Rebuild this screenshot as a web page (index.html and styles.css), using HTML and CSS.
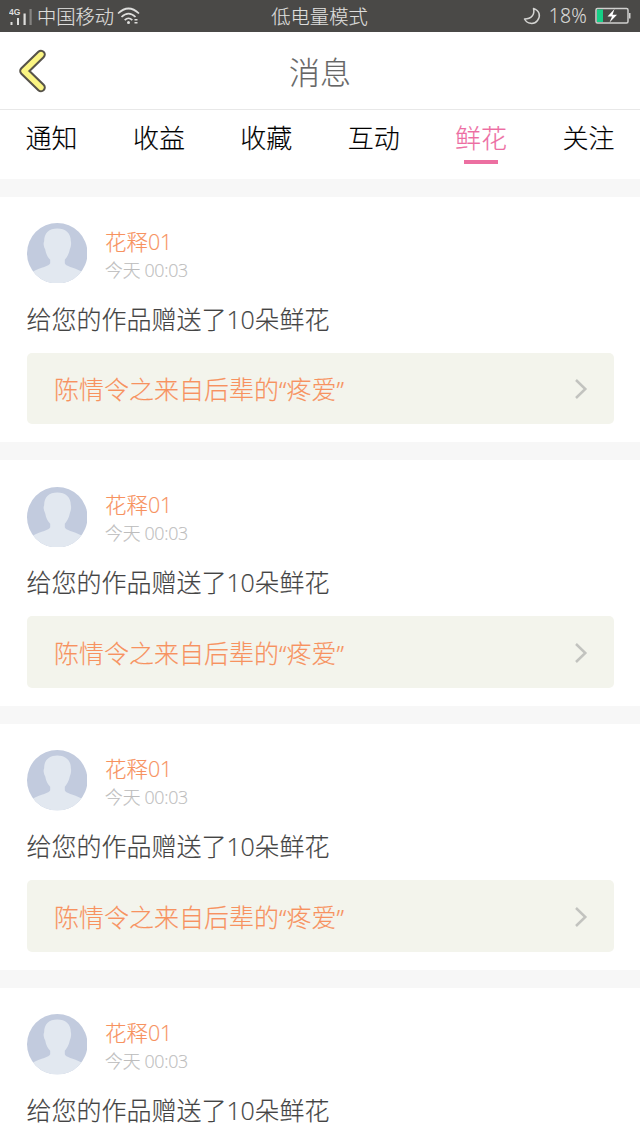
FILE: index.html
```
<!DOCTYPE html>
<html lang="zh-CN">
<head>
<meta charset="utf-8">
<title>消息</title>
<link rel="stylesheet" href="styles.css">
</head>
<body>
<svg class="defs" width="0" height="0" aria-hidden="true">
  <defs>
    <clipPath id="disc"><circle cx="30" cy="30" r="30"/></clipPath>
    <symbol id="person" viewBox="0 0 60 60">
      <g clip-path="url(#disc)">
        <rect width="60" height="60" fill="#c2cbde"/>
        <path d="M30 5.500C38 5.500 43.500 10 43.500 18C44 20 43.800 23 42.500 26C41.500 31 39.500 34 37.500 36.500V40C38 43 46 44 54 48L60 60H0L6 48C14 44 22 43 23 40V36.500C20.500 34 19 31 18 26C16.500 23 16 20 17 18C17 10 22 5.500 30 5.500Z" fill="#e2e8f0"/>
      </g>
    </symbol>
    <symbol id="chevron" viewBox="0 0 14 22"><path d="M2 2L11.300 11L2 20" fill="none" stroke="#c2c3bf" stroke-width="2.500"/></symbol>
  </defs>
</svg>
<div class="status">
  <div class="status-left">
    <svg class="signal" width="26" height="20" viewBox="0 0 26 20">
      <text class="signal-tag" x="0" y="8">4G</text>
      <g fill="#dededc"><rect x="1.500" y="15" width="2" height="3"/><rect x="8" y="11" width="2" height="7"/><rect x="14.500" y="6.500" width="2.200" height="11.500"/><rect x="20.500" y="2" width="2.200" height="16" opacity=".4"/></g>
    </svg>
    <span class="carrier">中国移动</span>
    <svg class="wifi" width="24" height="20" viewBox="0 0 24 20">
      <g fill="none" stroke="#dededc" stroke-width="1.700"><path d="M1 7.500Q11.500-2.500 22 7.500"/><path d="M4.500 11Q11.500 4 18.500 11"/><path d="M7.700 14.200Q11.500 10.300 15.300 14.200"/></g>
      <g fill="#dededc"><circle cx="11.500" cy="16.500" r="1.500"/><rect x="17.500" y="13" width="3" height="1.500"/><rect x="17.500" y="16" width="3" height="1.500"/></g>
    </svg>
  </div>
  <span class="mode">低电量模式</span>
  <div class="status-right">
    <svg width="18" height="18" viewBox="0 0 18 18"><path d="M10.500 1.500C12 7.500 8.500 12 1.500 12C4 17 11 18 14.500 13.500C18 9 16.500 3.500 10.500 1.500Z" fill="none" stroke="#d4d4d2" stroke-width="1.500" stroke-linejoin="round"/></svg>
    <span class="percent num">18%</span>
    <svg width="36" height="18" viewBox="0 0 36 18"><rect x="1" y="1.500" width="32" height="14.500" rx="1.500" fill="none" stroke="#d0d0ce" stroke-width="1.500"/><rect x="2" y="2.500" width="6" height="12.500" fill="#16cf86"/><path d="M34 6h1.500v5.500H34z" fill="#d0d0ce"/><path d="M19.500 2L12.500 9.500H17L14.500 15.500L22 7.800H17.500Z" fill="#fff"/></svg>
  </div>
</div>
<header class="header">
  <svg class="back" width="28" height="44" viewBox="0 0 28 44"><g fill="none" stroke-linecap="round" stroke-linejoin="round"><path d="M23 5.500L6 22L23 38.500" stroke="#57534a" stroke-width="9.600"/><path d="M23 5.500L6 22L23 38.500" stroke="#fbf583" stroke-width="5.400"/></g></svg>
  <h1 class="title">消息</h1>
</header>
<nav class="tabs">
  <a class="tab">通知</a><a class="tab">收益</a><a class="tab">收藏</a><a class="tab">互动</a><a class="tab active">鲜花</a><a class="tab">关注</a>
</nav>
<main class="feed">
  <article class="post">
    <div class="author"><svg class="avatar"><use href="#person"/></svg><div class="meta"><div class="name">花释<span class="num">01</span></div><div class="time">今天 <span class="num">00:03</span></div></div></div>
    <p class="message">给您的作品赠送了<span class="num">10</span>朵鲜花</p>
    <a class="work"><span class="work-title">陈情令之来自后辈的<span class="quote">“</span>疼爱<span class="quote">”</span></span><svg class="arrow"><use href="#chevron"/></svg></a>
  </article>
  <article class="post">
    <div class="author"><svg class="avatar"><use href="#person"/></svg><div class="meta"><div class="name">花释<span class="num">01</span></div><div class="time">今天 <span class="num">00:03</span></div></div></div>
    <p class="message">给您的作品赠送了<span class="num">10</span>朵鲜花</p>
    <a class="work"><span class="work-title">陈情令之来自后辈的<span class="quote">“</span>疼爱<span class="quote">”</span></span><svg class="arrow"><use href="#chevron"/></svg></a>
  </article>
  <article class="post">
    <div class="author"><svg class="avatar"><use href="#person"/></svg><div class="meta"><div class="name">花释<span class="num">01</span></div><div class="time">今天 <span class="num">00:03</span></div></div></div>
    <p class="message">给您的作品赠送了<span class="num">10</span>朵鲜花</p>
    <a class="work"><span class="work-title">陈情令之来自后辈的<span class="quote">“</span>疼爱<span class="quote">”</span></span><svg class="arrow"><use href="#chevron"/></svg></a>
  </article>
  <article class="post last">
    <div class="author"><svg class="avatar"><use href="#person"/></svg><div class="meta"><div class="name">花释<span class="num">01</span></div><div class="time">今天 <span class="num">00:03</span></div></div></div>
    <p class="message">给您的作品赠送了<span class="num">10</span>朵鲜花</p>
  </article>
</main>
</body>
</html>
```
FILE: styles.css
```
* { box-sizing: border-box; }
body {
  margin: 0;
  height: 1138px;
  overflow: hidden;
  display: flex;
  flex-direction: column;
  background: #fff;
  font-family: "Noto Sans CJK SC", "Noto Sans", sans-serif;
  font-weight: 300;
  -webkit-text-stroke: .15px currentColor;
}
svg { display: block; flex: none; }
.defs { position: absolute; }
.num { font-family: "Open Sans", "Noto Sans", sans-serif; font-weight: 300; line-height: 1; letter-spacing: -.3px; }
.status {
  flex: none;
  height: 32px;
  padding: 0 9px 0 9px;
  display: grid;
  grid-template-columns: 1fr auto 1fr;
  align-items: center;
  background: #4a4947;
  color: #dededc;
  font-size: 19.3px;
  line-height: 32px;
}
.status-left, .status-right { display: flex; align-items: center; }
.signal { margin-right: 2px; margin-top: 1px; }
.signal-tag { font: 700 8.5px "Liberation Sans", sans-serif; fill: #dededc; -webkit-text-stroke: 0; }
.wifi { margin-left: 3px; }
.mode { margin-right: 1px; }
.status-right { justify-content: flex-end; gap: 8px; }
.percent { letter-spacing: .2px; }
.header {
  flex: none;
  height: 78px;
  padding: 0 18px;
  display: grid;
  grid-template-columns: 28px 1fr 28px;
  align-items: center;
  border-bottom: 1.5px solid #e8e8e8;
}
.title {
  margin: 0;
  text-align: center;
  color: #666;
  font-size: 31px;
  font-weight: 300;
  line-height: 46px;
}
.tabs {
  flex: none;
  height: 68.5px;
  padding: 8px 25.5px 0;
  display: flex;
  justify-content: space-between;
}
.tab {
  display: flex;
  flex-direction: column;
  align-items: center;
  color: #000;
  font-size: 26px;
  line-height: 38px;
}
.active { color: #ed6da2; }
.active::after {
  content: "";
  width: 34px;
  height: 4px;
  margin-top: 4px;
  background: #ec6fa1;
}
.feed { flex: none; }
.post {
  height: 263.8px;
  padding: 26px 26.5px 0;
  border-top: 18px solid #f7f7f7;
}
.last { height: 149px; }
.author { display: flex; align-items: center; gap: 18px; height: 61px; }
.avatar { width: 60.5px; height: 60.5px; }
.name { color: #f7925f; font-size: 21.5px; line-height: 30px; margin-top: 1px; }
.time { color: #bdbdbd; font-size: 17.8px; line-height: 26px; }
.message {
  margin: 16px 0 17px;
  color: #444;
  font-size: 25px;
  line-height: 36px;
}
.work {
  height: 71.5px;
  padding: 0 26px 0 27.5px;
  display: flex;
  align-items: center;
  justify-content: space-between;
  border-radius: 5px;
  background: #f3f4ec;
  color: #f7925f;
  font-size: 25px;
}
.quote { font-family: "Noto Sans", sans-serif; font-size: 24px; }
.arrow { width: 14px; height: 22px; margin-top: 2px; }
```
